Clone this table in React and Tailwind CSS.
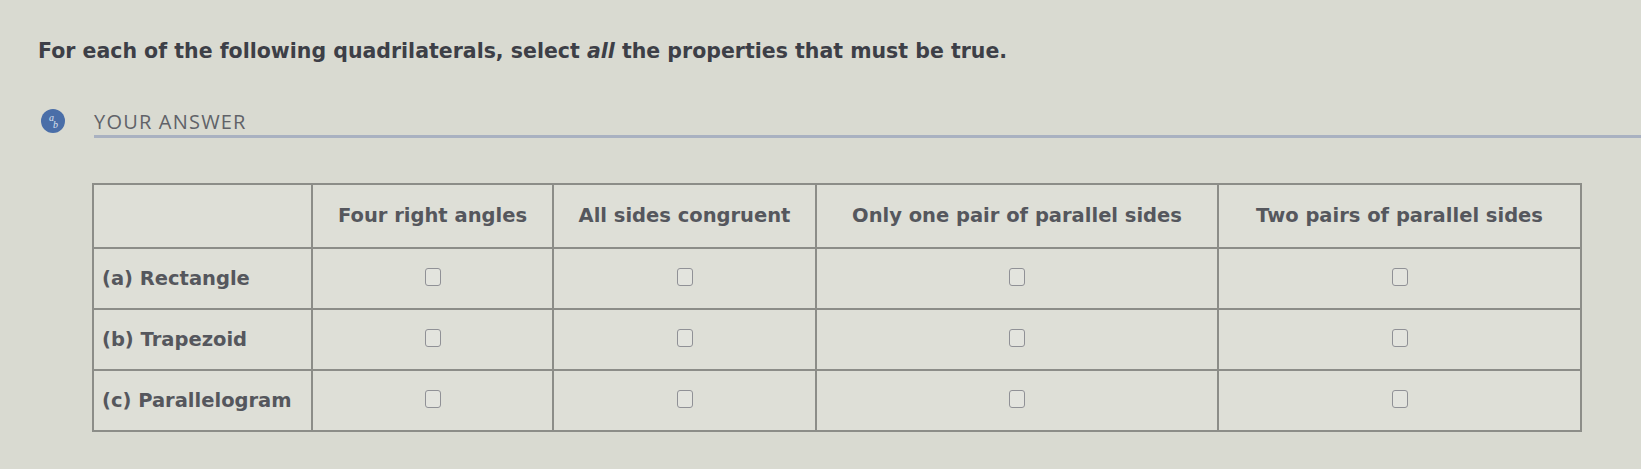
import React from "react";

// Column headers and rows of the quadrilateral table
const columns = [
  "Four right angles",
  "All sides congruent",
  "Only one pair of parallel sides",
  "Two pairs of parallel sides",
];

const rows = ["(a) Rectangle", "(b) Trapezoid", "(c) Parallelogram"];

const colWidths = ["w-[219px]", "w-[241px]", "w-[263px]", "w-[402px]", "w-[363px]"];

function Checkbox() {
  return (
    <span className="inline-block w-[16px] h-[18px] mb-[5px] rounded-[3px] border-[1.5px] border-[#909196] bg-[#e3e4de] align-middle" />
  );
}

export default function App() {
  return (
    <div className="w-[1641px] h-[469px] bg-[#d9dad1] font-['DejaVu_Sans',sans-serif] overflow-hidden">
      <div className="pt-[37px] pl-[38px] text-[20.5px] leading-[28px] font-semibold text-[#3d3f47]">
        For each of the following quadrilaterals, select <i>all</i> the properties that must be true.
      </div>

      <div className="flex items-start mt-[44px] pl-[41px]">
        <div className="relative w-[24px] h-[24px] rounded-full bg-[#4a6ea8] text-[#dbe2ef] text-[10px] font-['Liberation_Serif',serif] italic leading-none">
          <span className="absolute left-[8px] top-[4px]">a</span>
          <span className="absolute left-[12px] top-[11px]">b</span>
        </div>
        <div className="flex-1 ml-[29px]">
          <div className="font-['Open_Sans',sans-serif] text-[20px] tracking-[1.2px] text-[#606268] leading-[22px] pt-[2px]">
            YOUR ANSWER
          </div>
          <div className="h-[3px] mt-[2px] bg-[#a9b1c1]" />
        </div>
      </div>

      <div className="pl-[92px] mt-[45px]">
        <table className="border-collapse border-2 border-[#8c8d88] bg-[#dedfd7] text-[19.5px] font-semibold text-[#55575d]">
          <thead>
            <tr className="h-[64px]">
              <th className={`${colWidths[0]} border-2 border-[#8c8d88]`} />
              {columns.map((c, i) => (
                <th key={c} className={`${colWidths[i + 1]} border-2 border-[#8c8d88] font-semibold text-center`}>
                  {c}
                </th>
              ))}
            </tr>
          </thead>
          <tbody>
            {rows.map((r) => (
              <tr key={r} className="h-[61px]">
                <td className="border-2 border-[#8c8d88] pl-[8px] text-left">{r}</td>
                {columns.map((c) => (
                  <td key={c} className="border-2 border-[#8c8d88] text-center align-middle">
                    <Checkbox />
                  </td>
                ))}
              </tr>
            ))}
          </tbody>
        </table>
      </div>
    </div>
  );
}
